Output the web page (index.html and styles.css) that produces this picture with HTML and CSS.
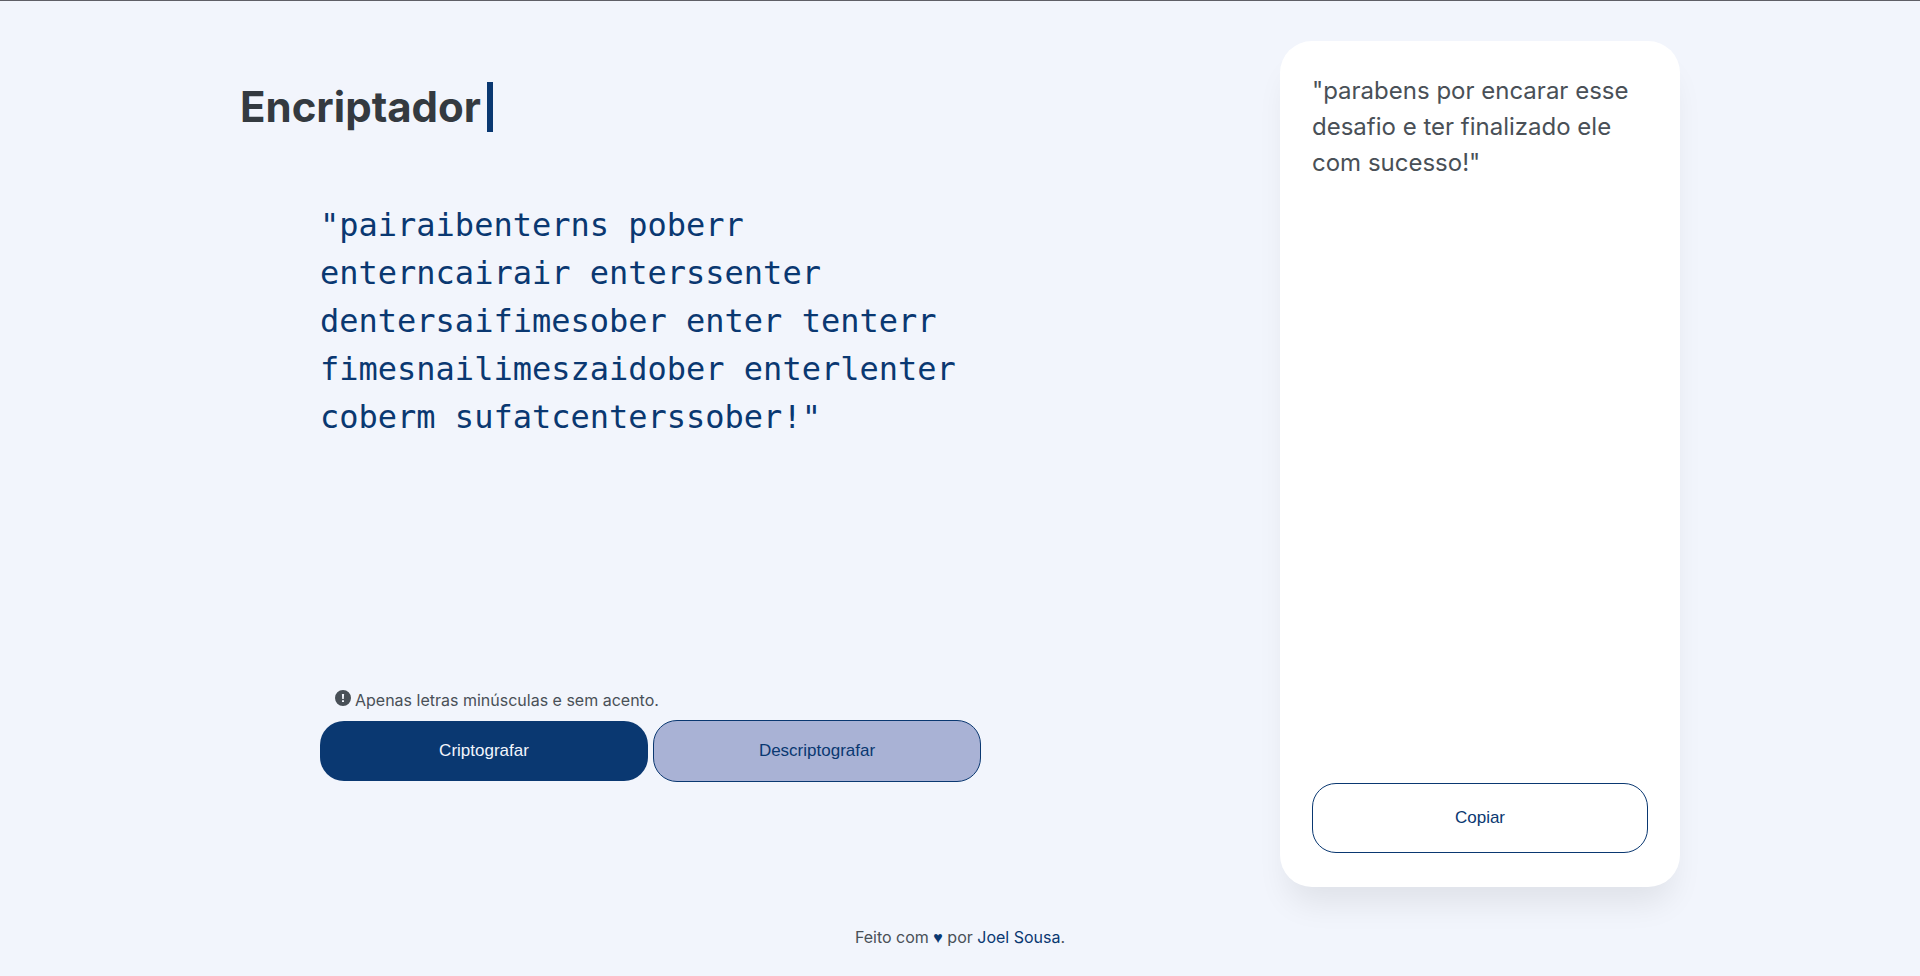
FILE: index.html
```html
<!DOCTYPE html>
<html lang="pt-BR">
<head>
<meta charset="utf-8">
<meta name="viewport" content="width=device-width, initial-scale=1">
<title>Encriptador</title>
<link rel="stylesheet" href="styles.css">
</head>
<body>
<main class="content">
  <section class="editor">
    <h1 class="title"><span class="title-text">Encriptador</span></h1>
    <div class="form">
      <textarea class="input" aria-label="Texto" spellcheck="false">"pairaibenterns poberr enterncairair enterssenter dentersaifimesober enter tenterr fimesnailimeszaidober enterlenter coberm sufatcenterssober!"</textarea>
      <p class="hint">
        <svg class="hint-icon" viewBox="0 0 16 16" aria-hidden="true"><path fill="currentColor" fill-rule="evenodd" d="M8 0a8 8 0 1 1 0 16A8 8 0 0 1 8 0zM6.9 4l.3 5h1.6l.3-5zM7 10.2v1.9h2v-1.9z"/></svg>
        <span>Apenas letras minúsculas e sem acento.</span>
      </p>
      <div class="actions">
        <button class="button button-primary" type="button">Criptografar</button>
        <button class="button button-secondary" type="button">Descriptografar</button>
      </div>
    </div>
  </section>
  <aside class="card">
    <p class="result">"parabens por encarar esse desafio e ter finalizado ele com sucesso!"</p>
    <button class="button button-copy" type="button">Copiar</button>
  </aside>
</main>
<footer class="footer">Feito com <span class="accent heart">♥</span> por <a class="accent" href="#">Joel Sousa</a>.</footer>
</body>
</html>
```
FILE: styles.css
```css
* {
  box-sizing: border-box;
  margin: 0;
}

body {
  display: flex;
  flex-direction: column;
  min-height: 100vh;
  border-top: 1px solid #5f5f66;
  background: #f2f5fc;
  color: #495057;
  font: 16px/24px Inter, sans-serif;
}

.content {
  display: flex;
  flex: 1;
  justify-content: space-between;
  width: 75%;
  margin: 0 auto;
  padding-top: 40px;
}

.editor {
  display: flex;
  flex: 1;
  flex-direction: column;
  padding: 41px 0 105px;
}

.title {
  color: #343a40;
  font-size: 42px;
  line-height: 50px;
}

.title-text {
  display: inline-block;
  padding-right: 6px;
  border-right: 6px solid #0a3871;
}

.form {
  display: flex;
  flex: 1;
  flex-direction: column;
  width: 661px;
  max-width: 100%;
  margin: 69px 0 0 80px;
}

.input {
  flex: 1;
  padding: 0;
  border: 0;
  outline: 0;
  background: transparent;
  color: #0a3871;
  font: 32px/48px "DejaVu Sans Mono", monospace;
  resize: none;
}

.hint {
  display: flex;
  gap: 4px;
  padding: 0 15px 8px;
}

.hint-icon {
  flex: none;
  width: 16px;
  height: 16px;
  margin-top: 2px;
}

.actions {
  display: grid;
  grid-template-columns: 1fr 1fr;
  align-items: center;
  gap: 5px;
}

.button {
  border: 1px solid #0a3871;
  border-radius: 24px;
  color: #0a3871;
  font: 17px/20px "Liberation Sans", sans-serif;
  cursor: pointer;
}

.button-primary {
  height: 60px;
  border: 0;
  background: #0a3871;
  color: #f2f5fc;
}

.button-secondary {
  height: 62px;
  background: #a9b2d5;
}

.card {
  display: flex;
  flex-direction: column;
  justify-content: space-between;
  width: 400px;
  padding: 32px 32px 34px;
  border-radius: 32px;
  background: #fff;
  box-shadow: 0 24px 32px -8px rgba(0, 0, 0, 0.08);
}

.result {
  font-size: 24px;
  line-height: 36px;
}

.button-copy {
  height: 70px;
  background: #fff;
}

.footer {
  padding: 38px 0 26px;
  text-align: center;
}

.accent {
  color: #0a3871;
  text-decoration: none;
}

.heart {
  font-family: "Liberation Sans", sans-serif;
}
```
